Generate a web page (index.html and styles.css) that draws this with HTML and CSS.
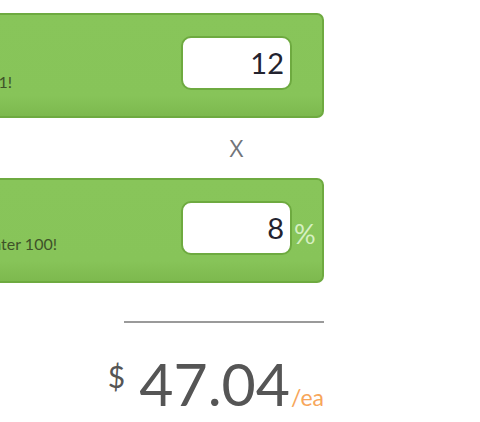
FILE: index.html
```html
<!DOCTYPE html>
<html>
<head>
<meta charset="utf-8">
<link rel="stylesheet" href="styles.css">
</head>
<body>
<div class="calc">
  <div class="card">
    <div class="label label-qty"><span>Enter your quantity, minimum order is 1!</span></div>
    <div class="input">12</div>
  </div>
  <div class="times">X</div>
  <div class="card card-pct">
    <div class="label label-pct"><span>Get a bigger discount when you order greater 100!</span></div>
    <div class="input">8</div>
    <div class="pct">%</div>
  </div>
  <div class="rule"></div>
  <div class="price">
    <span class="cur">$</span><span class="amount">47.04</span><span class="unit">/ea</span>
  </div>
</div>
</body>
</html>
```
FILE: styles.css
```css
html, body { margin: 0; padding: 0; background: #fff; }
body { font-family: Lato, "Open Sans", sans-serif; overflow: hidden; }
.calc {
  width: 524px;
  margin-left: -200px;
  padding-top: 13px;
  display: flex;
  flex-direction: column;
}
.card {
  box-sizing: border-box;
  height: 105px;
  border: 2px solid #6eaa40;
  border-radius: 7px;
  background: linear-gradient(to bottom, #88c55a 0%, #87c459 80%, #7db94e 100%);
  display: flex;
  align-items: flex-start;
  padding: 21px 30px 0 0;
}
.card-pct { padding-right: 6px; }
.label {
  flex: 1 1 auto;
  min-width: 0;
  display: flex;
  justify-content: flex-end;
  font-size: 16px;
  line-height: 20px;
  color: #3e5229;
  white-space: nowrap;
  padding-top: 36px;
}
.label span { flex: none; }
.label-qty { margin-right: 169px; }
.label-pct { margin-right: 124px; padding-top: 33px; }
.input {
  flex: none;
  box-sizing: border-box;
  width: 111px;
  height: 54px;
  background: #fff;
  border: 2px solid #6eaa40;
  border-radius: 10px;
  font-size: 29px;
  line-height: 50px;
  color: #23232f;
  text-align: right;
  padding-right: 6px;
}
.pct {
  flex: none;
  font-size: 27px;
  line-height: 50px;
  color: #d6f0c2;
  margin-left: 2px;
  padding-top: 8px;
  width: 22px;
}
.times {
  box-sizing: border-box;
  height: 60px;
  padding-left: 381px;
  padding-right: 32px;
  text-align: center;
  font-size: 24px;
  line-height: 30px;
  padding-top: 15px;
  color: #717479;
  font-family: "Open Sans", sans-serif;
}
.rule {
  margin-top: 38px;
  margin-left: 324px;
  height: 2px;
  background: #9a9a9a;
}
.price {
  margin-top: 26px;
  display: flex;
  justify-content: flex-end;
  align-items: baseline;
  color: #555555;
}
.cur {
  font-size: 30px;
  align-self: flex-start;
  line-height: 30px;
  margin-right: 14px;
  margin-top: 12px;
}
.amount {
  font-size: 59px;
  line-height: 70px;
}
.unit {
  font-size: 23px;
  color: #f7a65a;
  margin-left: 1px;
}
```
